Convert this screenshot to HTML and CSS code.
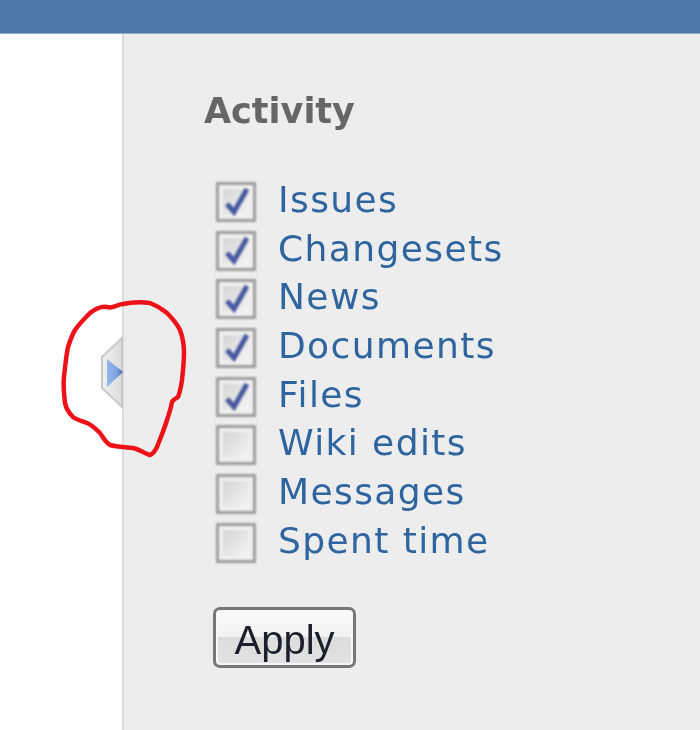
FILE: index.html
```html
<!DOCTYPE html>
<html lang="en">
<head>
<meta charset="utf-8">
<title>Activity</title>
<link rel="stylesheet" href="styles.css">
</head>
<body>
<header class="topbar"></header>
<div class="layout">
  <main class="content"></main>
  <aside class="sidebar">
    <h3 class="title">Activity</h3>
    <ul class="filters">
      <li class="filter"><span class="box"><svg class="tick" viewBox="0 0 30 30"><path d="M6 17l7 8L26 2"/></svg></span><a class="link">Issues</a></li>
      <li class="filter"><span class="box"><svg class="tick" viewBox="0 0 30 30"><path d="M6 17l7 8L26 2"/></svg></span><a class="link">Changesets</a></li>
      <li class="filter"><span class="box"><svg class="tick" viewBox="0 0 30 30"><path d="M6 17l7 8L26 2"/></svg></span><a class="link">News</a></li>
      <li class="filter"><span class="box"><svg class="tick" viewBox="0 0 30 30"><path d="M6 17l7 8L26 2"/></svg></span><a class="link">Documents</a></li>
      <li class="filter"><span class="box"><svg class="tick" viewBox="0 0 30 30"><path d="M6 17l7 8L26 2"/></svg></span><a class="link">Files</a></li>
      <li class="filter"><span class="box"></span><a class="link">Wiki edits</a></li>
      <li class="filter"><span class="box"></span><a class="link">Messages</a></li>
      <li class="filter"><span class="box"></span><a class="link">Spent time</a></li>
    </ul>
    <button class="apply" type="button">Apply</button>
  </aside>
</div>
<svg class="annotation" viewBox="0 0 700 730" width="700" height="730" aria-hidden="true">
  <defs>
    <linearGradient id="toggleFill" x1="0" x2="1" y1="0" y2="0">
      <stop offset="0" stop-color="#f0f0f0"/>
      <stop offset="1" stop-color="#dcdcdc"/>
    </linearGradient>
    <linearGradient id="arrowFill" x1="0" x2="1" y1="0" y2="0">
      <stop offset="0" stop-color="#93b6ec"/>
      <stop offset="0.6" stop-color="#7fa3e0"/>
      <stop offset="1" stop-color="#3f62a8"/>
    </linearGradient>
  </defs>
  <polygon class="toggle" points="122,338 102,357 102,388 122,407"/>
  <polygon class="arrow" points="107,359 107,387 123,372"/>
  <path class="scribble" d="M107 307C113 309 118 304 123 304C132 302 142 302 150 303C158 306 162 309 167 313C173 319 177 324 180 330C183 338 184 346 184 353C184 362 183 371 182 380C181 387 180 392 178 397C175 399 173 400 172 402C171 408 169 414 167 420C164 430 160 439 157 447C155 451 153 454 150 455C145 454 139 449 133 448C125 447 117 447 110 445C105 442 103 437 100 433C96 429 92 425 87 423C82 421 77 420 73 417C69 413 66 408 65 403C64 394 63 386 64 377C65 367 66 357 68 347C70 341 72 335 75 330C79 324 85 318 90 313C95 309 101 306 107 307Z"/>
</svg>
</body>
</html>
```
FILE: styles.css
```css
html, body {
  margin: 0;
  height: 730px;
  overflow: hidden;
  background: #fff;
}
body {
  position: relative;
  font-family: "DejaVu Sans", Verdana, sans-serif;
}
.topbar {
  height: 33px;
  background: #4f78aa;
  border-bottom: 1px solid #8fabcb;
  box-sizing: content-box;
}
.layout {
  display: flex;
  height: 696px;
}
.content {
  width: 122px;
  flex: none;
}
.sidebar {
  flex: 1;
  background: #ededed;
  border-left: 2px solid #dcdcdc;
  padding: 56px 0 0 80px;
}
.title {
  margin: 0;
  font-size: 35px;
  line-height: 42px;
  font-weight: bold;
  color: #666;
  filter: blur(0.5px);
}
.filters {
  list-style: none;
  margin: 50px 0 0;
  padding: 0 0 0 12px;
  display: flex;
  flex-direction: column;
  gap: 8.7px;
}
.filter {
  display: flex;
  align-items: center;
  gap: 22px;
  height: 40px;
}
.box {
  box-sizing: border-box;
  width: 40px;
  height: 40px;
  flex: none;
  border: 3px solid #9c9c9c;
  box-shadow: inset 0 0 0 4px #f0f0f0;
  background: linear-gradient(135deg, #cfcfcf, #fafafa);
  display: flex;
  align-items: center;
  justify-content: center;
  filter: blur(0.8px);
}
.tick {
  width: 30px;
  height: 30px;
  fill: none;
  stroke: #47599f;
  stroke-width: 5;
}
.link {
  margin-bottom: 4px;
  font-size: 36px;
  line-height: 40px;
  letter-spacing: 1.4px;
  color: #2f659f;
  filter: blur(0.5px);
}
.apply {
  display: block;
  box-sizing: border-box;
  width: 143px;
  height: 61px;
  margin: 44px 0 0 9px;
  padding: 6px 0 0;
  border: 3px solid #777;
  border-radius: 7px;
  background: linear-gradient(#fafafa 0, #f2f2f2 48%, #dcdcdc 50%, #e2e2e2 100%);
  box-shadow: inset 0 0 0 2px #f8f8f8;
  font-family: "Liberation Sans", Arial, sans-serif;
  font-size: 40px;
  color: #1d1d2b;
  filter: blur(0.6px);
}
.annotation {
  position: absolute;
  left: 0;
  top: 0;
  pointer-events: none;
}
.toggle {
  fill: url(#toggleFill);
  stroke: #c8c8c8;
  stroke-width: 2;
  filter: blur(0.5px);
}
.arrow {
  fill: url(#arrowFill);
  filter: blur(0.5px);
}
.scribble {
  fill: none;
  stroke: #ee1118;
  stroke-width: 4.5;
  stroke-linejoin: round;
  filter: blur(0.7px);
}
```
